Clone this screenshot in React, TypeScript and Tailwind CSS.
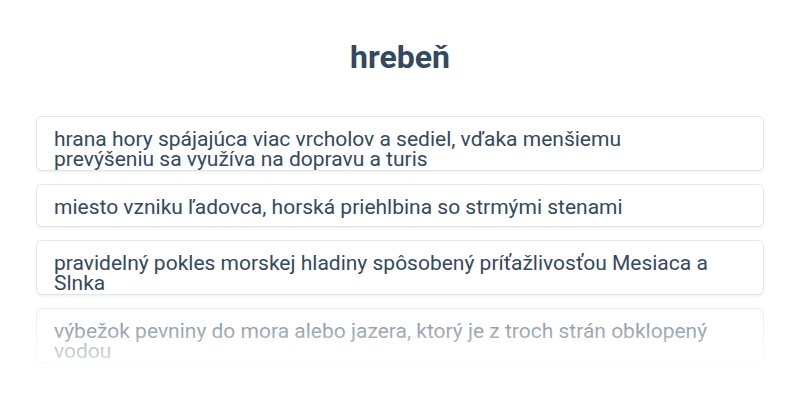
const cards = [
  {
    text: 'hrana hory spájajúca viac vrcholov a sediel, vďaka menšiemu prevýšeniu sa využíva na dopravu a turis',
  },
  { text: 'miesto vzniku ľadovca, horská priehlbina so strmými stenami' },
  { text: 'pravidelný pokles morskej hladiny spôsobený príťažlivosťou Mesiaca a Slnka' },
  { text: 'výbežok pevniny do mora alebo jazera, ktorý je z troch strán obklopený vodou' },
]

export default function App() {
  return (
    <div className="w-[800px] h-[400px] bg-white overflow-hidden font-['Roboto',sans-serif]">
      <h1 className="pt-[38px] text-center text-[32px] leading-[38px] font-bold text-[#34495e]">
        hrebeň
      </h1>

      <div className="relative mt-[40px] mx-[36px] h-[248px] overflow-hidden">
        <div className="flex flex-col gap-[13px]">
          {cards.map((card, i) => (
            <div
              key={i}
              className="max-h-[55px] overflow-hidden rounded-md border border-[#e3e6e9] bg-white pl-[17px] pr-[40px] pt-3 pb-[9px] shadow-[0_1px_3px_rgba(0,0,0,0.08)]"
            >
              <p className="text-[21px] leading-[20px] text-[#34495e]">{card.text}</p>
            </div>
          ))}
        </div>
        {/* fade out the last card */}
        <div className="pointer-events-none absolute inset-x-0 bottom-0 h-[64px] bg-gradient-to-b from-white/20 to-white/85" />
      </div>
    </div>
  )
}
